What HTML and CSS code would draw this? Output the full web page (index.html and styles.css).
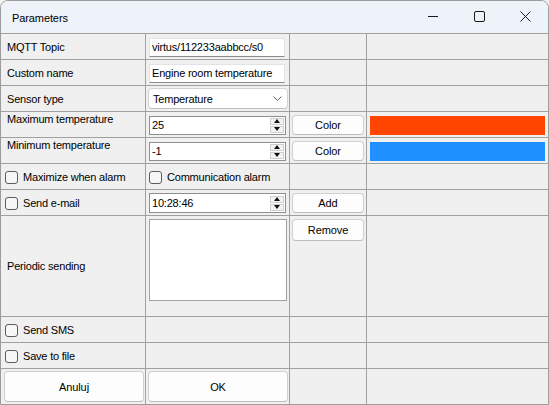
FILE: index.html
```html
<!DOCTYPE html>
<html lang="en">
<head>
    <meta charset="UTF-8">
    <title>Parameters</title>
    <link rel="stylesheet" href="styles.css">
</head>
<body>
    <div class="window">
        <div class="titlebar">
            <span class="title">Parameters</span>
            <div class="controls">
                <div class="ctrl"><svg width="10" height="10" viewBox="0 0 10 10"><path d="M0 5.5h10" stroke="#1a1a1a" stroke-width="1"/></svg></div>
                <div class="ctrl"><svg width="11" height="11" viewBox="0 0 11 11"><rect x="0.5" y="0.5" width="10" height="10" rx="1.5" fill="none" stroke="#1a1a1a" stroke-width="1"/></svg></div>
                <div class="ctrl"><svg width="11" height="11" viewBox="0 0 11 11"><path d="M0.5 0.5l10 10M10.5 0.5l-10 10" stroke="#1a1a1a" stroke-width="1"/></svg></div>
            </div>
        </div>

        <div class="grid">
            <!-- row 1 -->
            <div class="cell label">MQTT Topic</div>
            <div class="cell field"><input class="edit" type="text" value="virtus/112233aabbcc/s0"></div>
            <div class="cell"></div>
            <div class="cell"></div>

            <!-- row 2 -->
            <div class="cell label">Custom name</div>
            <div class="cell field"><input class="edit" type="text" value="Engine room temperature"></div>
            <div class="cell"></div>
            <div class="cell"></div>

            <!-- row 3 -->
            <div class="cell label">Sensor type</div>
            <div class="cell combo-cell">
                <div class="combo">
                    <span>Temperature</span>
                    <svg width="9" height="5" viewBox="0 0 9 5"><path d="M0.5 0.5l4 4 4-4" fill="none" stroke="#555" stroke-width="0.9"/></svg>
                </div>
            </div>
            <div class="cell"></div>
            <div class="cell"></div>

            <!-- row 4 -->
            <div class="cell label top">Maximum temperature</div>
            <div class="cell field">
                <div class="spin">
                    <span class="spin-value">25</span>
                    <span class="spin-buttons">
                        <span class="spin-btn"><i class="arrow-up"></i></span>
                        <span class="spin-btn"><i class="arrow-down"></i></span>
                    </span>
                </div>
            </div>
            <div class="cell btn-cell"><button class="btn">Color</button></div>
            <div class="cell swatch-cell"><div class="swatch max"></div></div>

            <!-- row 5 -->
            <div class="cell label top">Minimum temperature</div>
            <div class="cell field">
                <div class="spin">
                    <span class="spin-value">-1</span>
                    <span class="spin-buttons">
                        <span class="spin-btn"><i class="arrow-up"></i></span>
                        <span class="spin-btn"><i class="arrow-down"></i></span>
                    </span>
                </div>
            </div>
            <div class="cell btn-cell"><button class="btn">Color</button></div>
            <div class="cell swatch-cell"><div class="swatch min"></div></div>

            <!-- row 6 -->
            <div class="cell check-cell"><label class="check"><input type="checkbox">Maximize when alarm</label></div>
            <div class="cell check-cell alt"><label class="check"><input type="checkbox">Communication alarm</label></div>
            <div class="cell"></div>
            <div class="cell"></div>

            <!-- row 7 -->
            <div class="cell check-cell"><label class="check"><input type="checkbox">Send e-mail</label></div>
            <div class="cell field">
                <div class="spin time">
                    <span class="spin-value">10:28:46</span>
                    <span class="spin-buttons">
                        <span class="spin-btn"><i class="arrow-up"></i></span>
                        <span class="spin-btn"><i class="arrow-down"></i></span>
                    </span>
                </div>
            </div>
            <div class="cell btn-cell"><button class="btn">Add</button></div>
            <div class="cell"></div>

            <!-- row 8 -->
            <div class="cell label">Periodic sending</div>
            <div class="cell list-cell"><div class="list"></div></div>
            <div class="cell btn-cell top-btn"><button class="btn tall">Remove</button></div>
            <div class="cell"></div>

            <!-- row 9 -->
            <div class="cell check-cell"><label class="check"><input type="checkbox">Send SMS</label></div>
            <div class="cell"></div>
            <div class="cell"></div>
            <div class="cell"></div>

            <!-- row 10 -->
            <div class="cell check-cell"><label class="check"><input type="checkbox">Save to file</label></div>
            <div class="cell"></div>
            <div class="cell"></div>
            <div class="cell"></div>

            <!-- row 11 -->
            <div class="cell footer-cell"><button class="btn big">Anuluj</button></div>
            <div class="cell footer-cell ok"><button class="btn big">OK</button></div>
            <div class="cell"></div>
            <div class="cell"></div>
        </div>
    </div>
</body>
</html>
```

FILE: styles.css
```css
* {
    margin: 0;
    padding: 0;
    box-sizing: border-box;
    font-family: "Liberation Sans", Arial, sans-serif;
}

body {
    background: #f0f0f0;
    width: 549px;
    height: 405px;
    overflow: hidden;
}

.window {
    width: 549px;
    height: 405px;
    border: 1px solid #9c9c9c;
    border-radius: 8px 8px 0 0;
    background: #f0f0f0;
    overflow: hidden;
}

.titlebar {
    height: 32px;
    background: #eef3f9;
    display: flex;
    align-items: center;
    justify-content: space-between;
}

.title {
    font-size: 11px;
    letter-spacing: -0.1px;
    color: #000;
    padding-left: 11px;
    padding-top: 1px;
}

.controls {
    display: flex;
    height: 100%;
}

.ctrl {
    width: 46px;
    height: 30px;
    display: flex;
    align-items: center;
    justify-content: center;
}

.grid {
    display: grid;
    grid-template-columns: 144px 143px 76px 181px;
    grid-template-rows: repeat(7, 25px) 100px 25px 25px 35px;
    gap: 1px;
    background: #a0a0a0;
    border-top: 1px solid #a0a0a0;
}

.cell {
    background: #f0f0f0;
    display: flex;
    align-items: center;
    font-size: 11px;
    letter-spacing: -0.2px;
    color: #000;
}

.label {
    padding-left: 6px;
}

.label.top {
    align-items: flex-start;
    padding-top: 1px;
}

.field {
    padding-left: 3px;
}

.edit {
    width: 136px;
    height: 19px;
    margin-top: 1px;
    border: 1px solid #e3e3e3;
    border-bottom-color: #8a8a8a;
    border-radius: 1px;
    background: #fff;
    padding: 0 2px;
    font-size: 11px;
    letter-spacing: -0.2px;
    color: #000;
    outline: none;
}

.combo-cell {
    padding-left: 2px;
}

.combo {
    width: 140px;
    height: 21px;
    border: 1px solid #d3d3d3;
    border-bottom-color: #bdbdbd;
    border-radius: 4px;
    background: #fff;
    display: flex;
    align-items: center;
    justify-content: space-between;
    padding: 0 5px 0 4px;
}

.spin {
    width: 137px;
    height: 19px;
    margin-top: 1px;
    border: 1px solid #8f8f8f;
    background: #fff;
    display: flex;
    align-items: center;
    justify-content: space-between;
    padding-left: 2px;
}

.spin.time {
    height: 20px;
}

.spin-buttons {
    display: flex;
    flex-direction: column;
    gap: 1px;
    margin-right: 1px;
}

.spin-btn {
    width: 14px;
    height: 7px;
    background: #f3f3f3;
    border: 1px solid #cfcfcf;
    display: flex;
    align-items: center;
    justify-content: center;
}

.arrow-up {
    border-left: 3px solid transparent;
    border-right: 3px solid transparent;
    border-bottom: 4px solid #111;
}

.arrow-down {
    border-left: 3px solid transparent;
    border-right: 3px solid transparent;
    border-top: 4px solid #111;
}

.btn-cell {
    padding-left: 2px;
}

.btn {
    width: 72px;
    height: 20px;
    margin-top: 1px;
    border: 1px solid #d0d0d0;
    border-bottom-color: #bcbcbc;
    border-radius: 4px;
    background: #fdfdfd;
    font-size: 11px;
    letter-spacing: -0.1px;
    color: #000;
}

.btn.tall {
    height: 22px;
}

.top-btn {
    align-items: flex-start;
    padding-top: 2px;
}

.swatch-cell {
    padding-left: 3px;
}

.swatch {
    width: 175px;
    height: 19px;
    margin-top: 1px;
}

.swatch.max {
    background: #ff4500;
}

.swatch.min {
    background: #1e90ff;
}

.check-cell {
    padding-left: 4px;
}

.check-cell.alt {
    padding-left: 3px;
}

.check {
    display: flex;
    align-items: center;
    gap: 5px;
}

.check input {
    appearance: none;
    width: 13px;
    height: 13px;
    border: 1px solid #5c5c5c;
    border-radius: 3px;
    background: #f7f7f7;
    margin-top: 1px;
}

.list-cell {
    align-items: flex-start;
    padding: 3px 0 0 3px;
}

.list {
    width: 138px;
    height: 82px;
    background: #fff;
    border: 1px solid #a0a0a0;
}

.footer-cell {
    padding-left: 3px;
}

.footer-cell.ok {
    padding-left: 2px;
}

.btn.big {
    width: 140px;
    height: 31px;
    margin-top: 0;
}
```
